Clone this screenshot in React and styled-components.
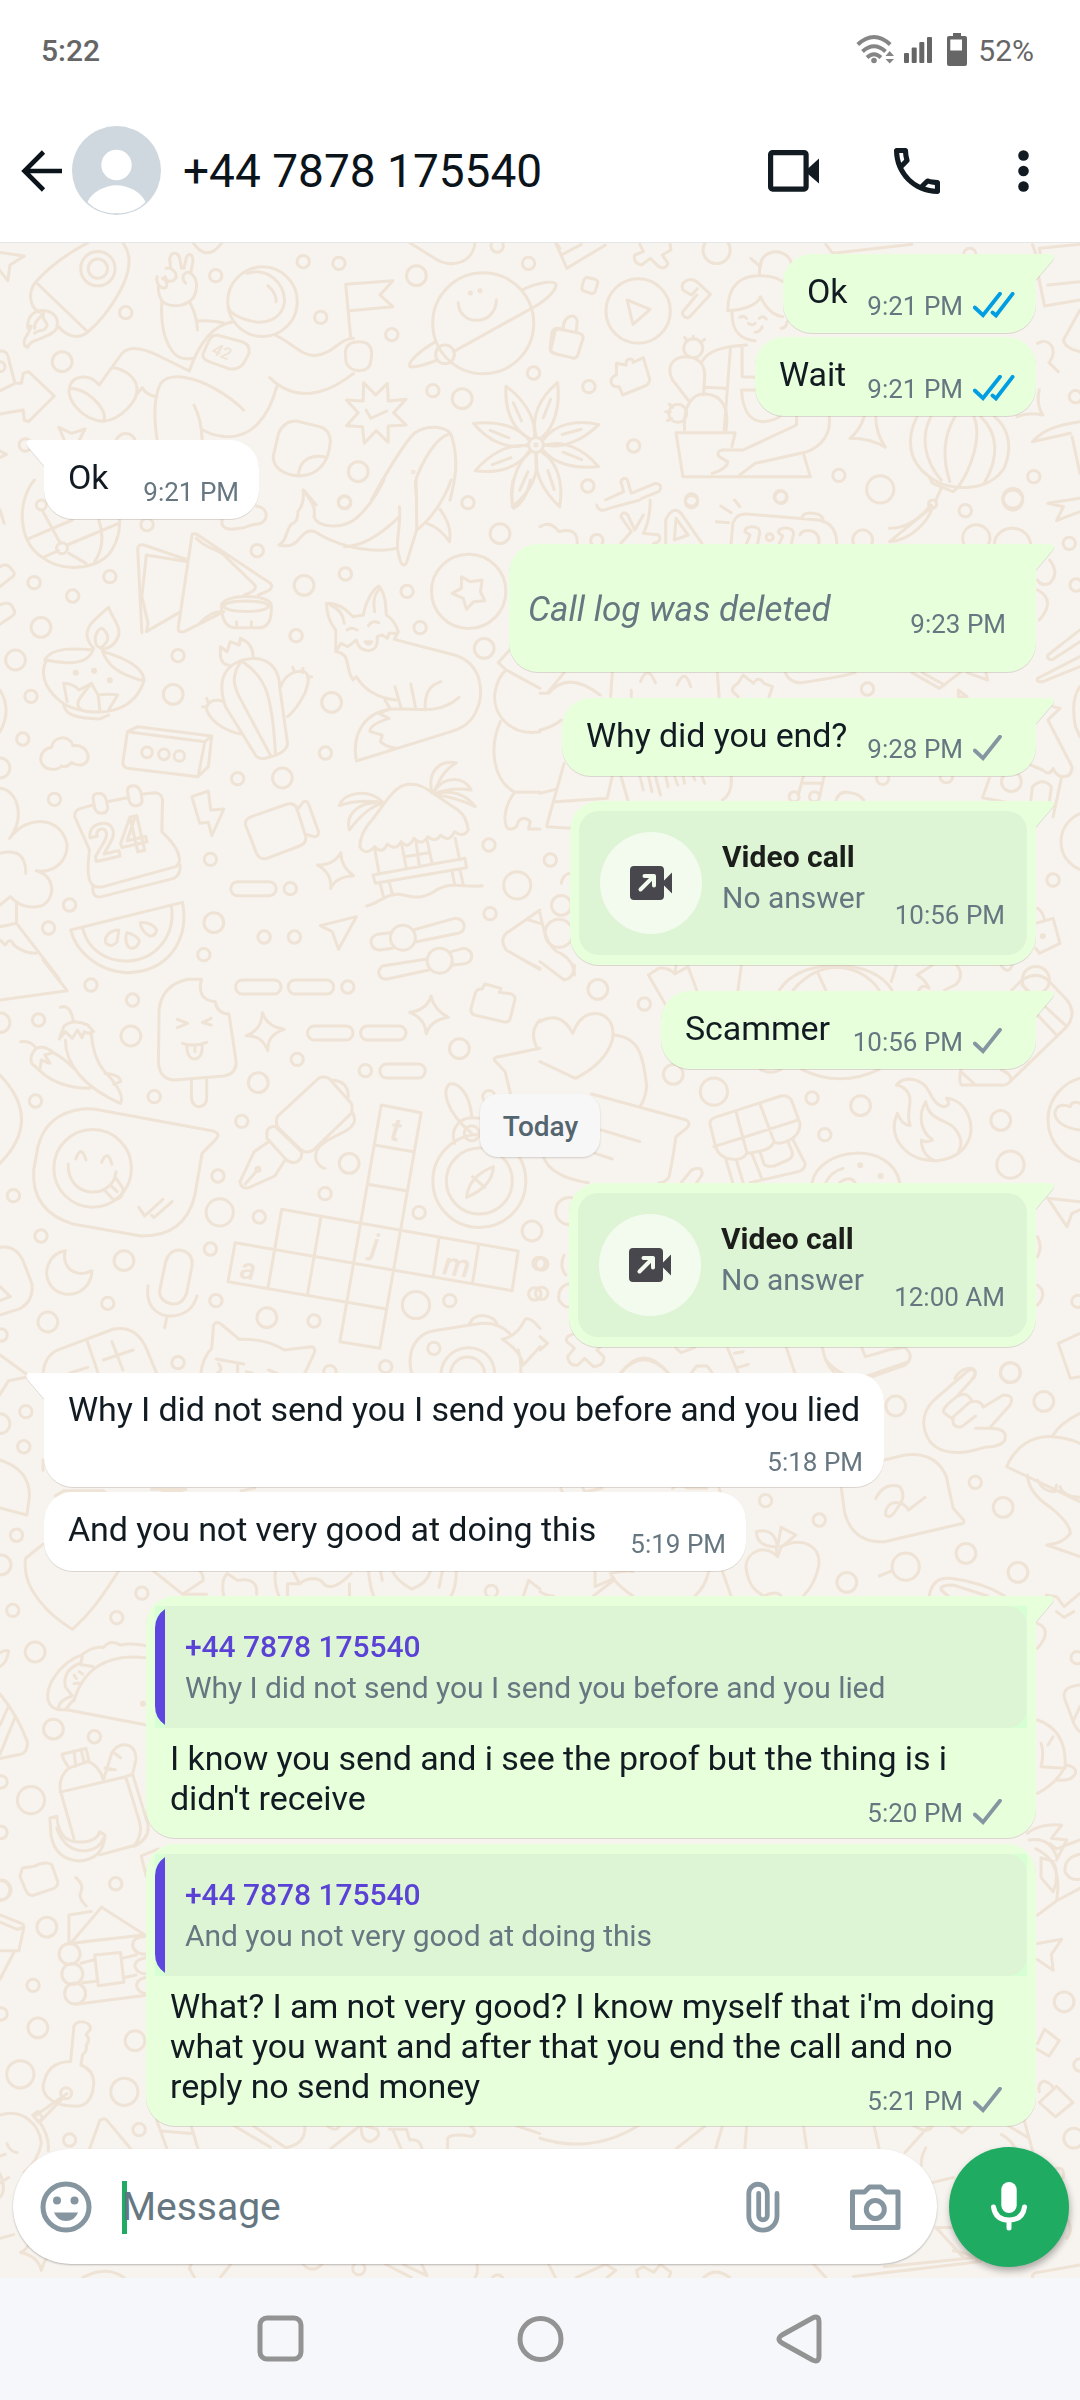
import styled, { createGlobalStyle, css } from "styled-components";

const line = "#efe3d6";

const pill = (x, y) => `M${x + 20} ${y}h92a20 21 0 0 1 0 42h-92a20 21 0 0 1 0 -42Z`;

// every patch of the wallpaper has its own origin and scale,
// s / m / l are the small, medium and large bubbles, c are other circles
const patches = [
    {
        x: 0, y: 0, kx: 2.8, ky: 3,
        s: [[604, 827], [849, 785], [949, 790], [352, 938], [898, 952], [1097, 1004], [1480, 790], [1392, 738], [1494, 1119], [1212, 1172], [71, 1335], [965, 1508]],
        m: [[174, 1085], [1166, 827], [1294, 1196], [1003, 1415], [352, 1330]],
        l: [],
        c: [[274, 806, 17.2], [274, 806, 9.6], [735, 905, 34.8], [1353, 970, 50.5], [1246, 1063, 9.4], [1317, 879, 1], [1344, 872, 1], [1157, 1416, 0.7], [0, 1100, 5]],
        d: [
            "M248 727C180 765 130 810 100 846C75 880 85 925 112 937M343 727C375 770 360 830 330 885C300 940 275 970 246 996C220 1020 185 1010 160 975M100 846L246 996",
            "M160 975C165 945 140 930 112 932C90 935 75 955 78 985C95 965 85 990 70 1015C65 1030 68 1040 78 1042C85 1020 100 1025 125 1010C150 1000 162 990 160 975M97 985C95 965 110 955 122 940C115 960 130 960 132 975C125 1000 110 985 97 1000",
            "M-5 757L68 768L28 795L22 842L-5 806M540 727Q580 790 622 727",
            "M440 830C435 850 450 870 465 862C470 850 465 840 455 835M465 805C480 800 498 820 492 835C480 850 465 845 462 830M478 805L475 775C480 755 498 755 503 775L508 805M515 805L522 772C530 755 542 765 540 785L534 818M520 850C505 835 515 812 530 818C555 830 555 870 540 895C520 920 480 925 455 905C445 890 443 870 443 860",
            "M453 905C450 960 455 1010 480 1050C495 1075 515 1080 540 1075M532 908C548 940 552 960 553 990M553 963C590 960 600 965 625 968M650 966C600 975 560 1020 530 1113L440 1065C395 1042 360 1035 340 1062L278 1155M278 1155C250 1120 205 1125 195 1160C185 1200 230 1260 290 1264C340 1258 390 1200 383 1160C378 1130 345 1105 315 1103M195 1165C240 1165 300 1220 292 1264M385 1180L398 1163Q410 1185 438 1190",
            "M692 820C750 800 797 850 797 905C790 960 740 975 700 962C670 955 645 940 640 925M750 857Q775 880 773 905",
            "M612 1006L680 1026Q702 1036 697 1060L682 1090Q667 1112 640 1106L585 1085Q562 1075 570 1058L585 1022Q595 1002 612 1006Z",
            "M770 1005C820 1030 840 1065 880 1067C930 1065 950 1015 990 1015M755 1133C820 1200 900 1195 990 1120M775 1160C750 1260 700 1310 640 1310Q600 1310 568 1290M440 1320C430 1250 430 1190 450 1150C480 1110 560 1140 600 1165Q650 1195 682 1230M543 1215C560 1250 565 1280 566 1320",
            "M1005 1025C960 1025 965 1060 970 1090C985 1120 1035 1120 1038 1085C1045 1050 1040 1025 1005 1025ZM982 1015L968 853L1100 842L1064 885L1100 920L978 932",
            "M1465 868C1510 845 1555 840 1557 855C1555 880 1510 915 1480 930L1270 1055M1220 1025C1180 1050 1140 1085 1148 1100C1160 1105 1200 1090 1225 1080M1283 908C1285 980 1388 980 1390 900",
            "M1145 727L1210 770C1260 810 1325 790 1330 727M1555 727L1568 745M1568 985L1555 990L1542 1050Q1545 1060 1568 1065",
            "M1018 1148L1052 1185L1085 1150L1087 1203L1137 1198L1102 1238L1137 1275L1087 1278L1087 1327L1053 1292L1020 1330L1015 1280L970 1277L1003 1238L970 1200L1017 1203ZM1025 1230L1038 1255L1083 1233",
            "M830 1263L895 1280Q925 1290 925 1325C920 1390 890 1425 840 1428C790 1425 765 1400 765 1370L780 1300Q795 1262 830 1263M835 1425C840 1380 870 1360 915 1372",
            "M1040 1500C1070 1440 1130 1330 1160 1300C1200 1270 1260 1280 1265 1310C1285 1380 1275 1440 1260 1500M1255 1303C1210 1320 1160 1430 1163 1455L1167 1500M850 1470L885 1515",
            "M-5 1055Q20 1045 25 1080L42 1150L60 1150L65 1120L80 1115L152 1188L80 1265L68 1260L65 1230L-5 1243M-5 1175L42 1150M180 1320L165 1282L200 1300L238 1287L222 1320M-5 1350L18 1363L-5 1375",
        ],
    },
    {
        x: 540, y: 0, kx: 2.904, ky: 3,
        s: [[1248, 763], [142, 1160], [272, 1338], [139, 1458], [868, 1426], [1434, 1430], [1555, 1190], [440, 1500], [698, 1490]],
        m: [[1373, 1495]],
        l: [[513, 750], [988, 1468]],
        c: [[285, 933, 32.2], [445, 1045, 9.5], [400, 1240, 9]],
        d: [
            "M45 727L78 805L190 735M62 765L120 733M290 733L300 755L275 765Q270 790 295 795L320 775L345 800Q365 810 372 790L355 765L380 750L378 733",
            "M135 832L160 838Q170 842 167 852L160 875Q157 882 148 880L125 872Q120 868 122 860L128 838ZM253 900L320 928L270 973Z",
            "M415 870C405 845 435 830 455 845L495 883L435 950C425 960 410 945 415 935L455 885M415 870L440 885L457 866",
            "M45 985L115 1000Q127 1005 125 1015L110 1065Q105 1078 92 1073L40 1060Q28 1055 30 1043L35 995ZM67 985C70 940 108 940 108 965L105 995",
            "M222 1090L250 1095C245 1075 275 1070 270 1088L300 1073L318 1135Q320 1150 305 1158L240 1185L230 1160C200 1165 200 1130 222 1125Z",
            "M612 775L640 800C640 760 680 750 700 758C720 762 730 785 730 790M638 795L637 823M545 932C545 850 590 825 640 827Q690 828 710 850M545 932C600 930 635 910 640 890Q665 945 705 950M558 935C555 1000 590 1020 625 1022M580 952Q592 945 600 955M637 955Q648 945 657 957M605 970Q615 978 625 970M645 980Q640 995 625 997M700 985Q715 985 718 965",
            "M600 1035C530 1040 490 1050 470 1085M553 1045L535 1290M587 1040L587 1130L625 1132M480 1162L538 1165M585 1170H670M585 1170C590 1250 620 1265 650 1265Q690 1260 700 1245M430 1200L385 1140C365 1100 385 1070 425 1070C460 1070 480 1095 478 1130L475 1185M420 1290C415 1220 440 1180 480 1182C530 1185 550 1225 540 1290",
            "M420 1012L428 1024M445 1008V1018M478 1018L466 1028M365 1235H378M375 1212L385 1222M370 1262L382 1256",
            "M395 1298H567L557 1340M395 1298L415 1430H785L765 1360M745 1250V1275L590 1350H530Q510 1355 520 1370L545 1385Q545 1405 500 1420M840 1250C845 1300 820 1340 770 1357L625 1390L580 1425",
            "M942 1248Q930 1290 900 1315Q960 1315 1003 1342Q975 1300 975 1248",
            "M830 733L850 760L1080 733M1430 733L1440 762M1568 733L1450 745L1460 800M1448 830L1465 918L1568 900M1475 855L1568 845M1445 1030C1480 1010 1505 1050 1480 1085M1478 1088L1505 1115M1450 1170Q1440 1210 1460 1245Q1420 1235 1385 1250M1568 930L1520 1020Q1525 1045 1568 1055",
            "M1095 1250C1065 1310 1065 1380 1130 1430C1190 1480 1310 1475 1350 1400C1375 1330 1355 1280 1320 1250M1135 1250C1105 1310 1115 1380 1165 1440M1205 1250C1170 1310 1170 1380 1190 1445M1260 1250C1285 1310 1250 1410 1215 1460M1280 1250C1330 1300 1335 1370 1290 1450M1130 1430L1140 1450L1200 1475L1215 1460M1165 1465L1150 1500",
            "M1430 1325C1460 1290 1500 1275 1568 1265M1430 1325L1540 1300M1545 1310L1568 1420M235 1445C240 1430 255 1435 255 1445L265 1480L335 1450Q360 1455 345 1475L295 1495M235 1445L243 1475L190 1500",
        ],
    },
    {
        x: 0, y: 480, kx: 2.904, ky: 3,
        s: [[427, 134], [1000, 66], [1359, 68], [747, 212], [1003, 282], [319, 290], [99, 308], [211, 348], [1182, 334], [1220, 443], [860, 467], [517, 527], [90, 649], [66, 777], [945, 819], [690, 896], [158, 958], [611, 1138], [1420, 1095], [1423, 1301], [202, 1275], [141, 1344], [767, 1371], [855, 1371], [592, 1424], [843, 1226]],
        m: [[1452, 161], [883, 316], [119, 442], [1406, 505], [45, 540], [503, 643], [963, 667], [820, 894], [0, 864], [621, 1328]],
        l: [[1502, 1216]],
        c: [[1361, 334, 37.2], [120, 75, 5], [180, 205, 5.5], [427, 817, 5.3], [476, 823, 5.3], [521, 828, 5.3], [1170, 1373, 12.5], [1277, 1442, 12.5], [220, 578, 1.5], [273, 572, 1.5], [319, 601, 1.5]],
        d: [
            "M100 0C50 60 50 180 120 230C180 280 290 270 325 210Q350 165 347 120M85 175L210 120M125 95L175 190M130 230L170 212M195 195L345 130M200 220L250 250M287 120Q310 190 275 245",
            "M0 260Q20 245 35 270Q50 285 30 295L0 320M0 375Q30 360 38 385Q50 400 30 412L0 433M0 90L12 130M645 120C640 150 670 150 695 145C715 145 730 130 745 133C780 130 785 85 745 78",
            "M412 458L400 210Q400 190 418 195L545 240M425 225L545 245M425 225L412 350L430 430L425 455L520 398M558 162Q560 160 570 162L785 310Q795 320 780 332L750 345M558 162L518 440Q515 460 535 455L650 395M570 175C600 210 640 205 660 235L740 315Q750 330 710 345M580 430Q610 395 640 395",
            "M643 378C643 340 790 340 788 378Q790 440 755 443H680Q645 440 643 378M650 378C655 400 775 400 780 378M650 378C655 358 775 358 780 378M687 425V443M730 425V443",
            "M880 30C915 75 915 90 912 110C920 145 1000 150 1040 110C1080 70 1100 30 1115 0M880 30Q885 70 865 95Q865 125 850 130C830 140 835 185 810 195Q850 205 870 175C890 150 910 145 930 165C1000 205 1090 220 1150 205M1000 200C1060 200 1120 150 1160 110M1160 80C1165 130 1150 180 1155 210Q1165 270 1180 250L1210 150C1250 120 1290 60 1310 0M1210 150Q1210 60 1208 0M1240 130Q1280 145 1305 185Q1315 140 1278 88",
            "M272 505C240 470 250 440 285 410Q300 395 315 382C330 420 350 440 345 465Q335 500 300 508M280 495C270 470 285 445 297 445C315 460 320 480 300 497Q290 510 280 495M130 540C150 500 220 505 270 510Q255 550 195 548Q150 545 135 540C110 590 140 640 190 675C250 705 380 720 418 603C350 585 310 560 295 505M300 515C350 530 420 560 418 603M185 675C190 700 210 715 290 717L315 705M185 610Q210 610 230 630L265 610L285 645Q320 640 342 645L315 690M185 610L195 665M265 610L235 650Q215 680 240 692M290 690L285 645",
            "M640 530L640 500L660 515L668 485L695 495L698 475Q735 490 735 530M640 530Q645 555 665 555M745 830L655 680C625 590 660 540 740 535C800 540 812 590 812 620L835 790Q835 820 770 835Q755 838 745 830M700 545C660 600 690 640 710 680L785 825M705 545C770 590 790 640 800 820M815 620C830 580 860 570 885 575Q905 590 885 640Q860 690 835 710M650 665C620 655 600 665 600 690C615 730 660 755 705 763M850 562L855 575M880 565L878 578M905 590H893M588 680H600M600 655L605 668",
            "M370 755L400 740L615 768L605 860L575 890L370 865Q355 860 357 845L370 755L595 785L575 890M595 785L615 768",
            "M948 370C990 370 1010 395 1025 410L1055 405C1060 370 1080 330 1100 318C1120 340 1120 380 1122 405Q1145 420 1157 455L1145 478L1320 525C1400 550 1410 640 1380 700Q1360 740 1310 755L1035 843C1020 760 1060 700 1130 688M948 370Q950 420 975 450L975 515C1020 520 1000 560 1025 600L1035 590Q1070 650 1150 660M975 515L990 490L1010 500L1035 480Q1040 510 1070 512Q1100 510 1095 470L1110 465L1125 475L1130 460L1155 460M960 375Q995 390 1000 430M1088 395Q1080 350 1100 330M1008 450Q1020 440 1037 450M1070 437Q1080 420 1100 428M1060 485Q1070 500 1080 485Z",
            "M1118 660L1132 685M1147 620L1165 685M1193 612L1207 685M1280 605Q1230 620 1235 690M1130 688C1200 680 1270 710 1333 652M1130 688L1100 700L1130 715Q1070 735 1075 755L1110 765L1105 785Q1120 800 1150 805",
            "M1340 290L1365 305L1400 300L1395 335L1408 362L1375 365L1355 388L1345 355L1313 340L1340 325Z",
            "M150 868C110 865 105 810 150 802C155 765 205 765 212 797C260 790 270 850 235 855Q215 855 208 847Q195 865 178 858Q170 870 150 868Z",
            "M270 975L235 985Q215 990 217 1010L260 1110Q250 1190 265 1210Q275 1225 300 1220L510 1160Q525 1150 520 1130Q515 1100 470 1055L472 960Q470 940 450 938L410 943M310 965L370 953M270 1220V1235Q275 1255 295 1250L505 1195Q525 1185 523 1155M270 955Q270 940 287 940Q305 940 310 965L313 985Q310 1000 295 1000Q280 1000 275 985ZM370 932Q370 917 387 917Q405 917 410 942L413 962Q410 977 395 977Q380 977 375 962Z",
            "M557 950L605 933L612 990L650 987L615 1067L605 1027L580 1030Z",
            "M730 1010L835 972Q855 968 862 985L888 1070Q890 1090 870 1098L775 1135Q755 1140 745 1120L713 1035Q710 1018 730 1010ZM862 990L882 965Q892 960 897 975L925 1055Q925 1070 912 1070L885 1062",
            "M1045 1100Q1045 1060 1080 1020C1120 970 1140 920 1185 913C1230 910 1240 930 1330 990Q1355 1010 1360 1050Q1345 1075 1320 1055Q1305 1090 1280 1065Q1265 1090 1242 1070Q1225 1100 1202 1075Q1185 1110 1165 1085Q1150 1115 1125 1092Q1110 1125 1088 1100Q1060 1130 1045 1100M1088 1105L1100 1175M1322 1075L1335 1140M1083 1185L1350 1135L1355 1163L1090 1210ZM1167 1095L1180 1165M1240 1080L1255 1150M1208 1085L1218 1160M1175 1130L1245 1118M1103 1208L1115 1255M1130 1205L1140 1245M1312 1170L1320 1212M1335 1168L1345 1212",
            "M1065 1278C1100 1270 1120 1240 1160 1243C1200 1250 1220 1260 1260 1235C1310 1200 1350 1225 1400 1217M1255 940C1240 880 1270 840 1325 848Q1290 870 1275 905L1260 935C1290 885 1350 890 1368 930Q1310 920 1265 940Q1340 925 1380 980Q1320 950 1265 945M1110 965C1070 925 1000 935 985 977Q1030 960 1095 965M1110 970C1050 960 1000 1000 1015 1050Q1060 985 1110 970",
            "M990 1118Q990 1160 1027 1187Q975 1190 960 1225Q965 1180 922 1155Q970 1155 990 1118Z",
            pill(670, 1205),
            "M930 1337L1035 1310L983 1408L965 1355Z",
            "M1135 1358L1095 1363Q1075 1370 1078 1390Q1082 1410 1105 1410L1140 1405M1200 1350L1320 1315Q1345 1315 1348 1338Q1348 1355 1330 1360L1210 1385M1240 1437L1110 1458Q1098 1470 1100 1480Q1105 1500 1125 1497L1245 1470M1310 1415L1345 1405Q1370 1408 1370 1430Q1368 1450 1345 1452L1310 1455",
            "M205 1350L530 1267C550 1380 490 1475 370 1478C280 1475 220 1410 205 1350ZM240 1345C255 1410 310 1445 370 1443C450 1440 510 1370 498 1280M345 1350L340 1385Q325 1405 308 1390C300 1370 320 1350 345 1350ZM368 1358Q400 1365 405 1385Q395 1410 375 1403Q360 1385 368 1358ZM407 1328Q440 1325 455 1350Q450 1370 435 1368Q410 1355 407 1328Z",
            "M0 925C50 930 75 1010 28 1075C80 1000 180 1010 195 1095C195 1150 150 1180 105 1172C160 1185 165 1255 120 1278Q65 1290 30 1250L0 1275M0 1120Q75 1100 75 1180M48 1265V1330L172 1497M0 1340L48 1330M0 1380L15 1395Q30 1370 40 1395Q70 1420 105 1420M0 630Q35 690 0 755",
            "M1568 755C1480 770 1430 700 1437 640Q1445 590 1470 570L1568 625M1470 570L1447 548L1480 510M1453 725C1420 800 1430 900 1495 937H1568M1495 937C1460 980 1460 1045 1480 1047Q1500 1050 1505 1025Q1520 1005 1540 1025L1535 1047H1568M1568 1290L1470 1360Q1450 1380 1470 1410L1568 1468M1535 1320L1568 1330M1490 0Q1480 50 1492 85Q1530 60 1540 0",
        ],
    },
    {
        x: 540, y: 500, kx: 2.904, ky: 3,
        s: [[1235, 32], [1537, 130], [165, 122], [951, 567], [30, 1080], [1490, 1140], [440, 5], [700, -8], [1557, 255], [995, 835], [1180, 830]],
        m: [[937, 120], [1373, 0], [1369, 845], [62, 1216]],
        l: [[1267, 115], [1440, 1440]],
        c: [[1140, 12, 4], [738, 890, 5], [797, 890, 5], [1600, 1025, 30], [55, 1300, 14], [1460, 1309, 1.5], [667, 112, 3.5]],
        d: [
            "M0 80Q30 60 55 95Q110 80 108 130M165 15Q170 40 200 25L290 0M320 0Q320 60 300 100L345 105Q355 125 330 130M235 50Q240 30 255 45L275 90L300 45M235 50L265 95L235 130M365 130V60Q385 15 410 40L470 130M390 120L395 55L430 105ZM555 130L560 70Q570 40 600 42L810 60Q860 70 862 130M760 55Q765 35 795 40Q825 45 822 65M525 18L555 38M565 0L580 20M512 65L548 68",
            "M1015 85C1060 85 1100 60 1135 15M1140 20C1130 60 1080 120 1015 125ZM1475 10L1568 -5M1475 10L1520 20L1500 62L1568 35M1320 130C1320 80 1410 60 1425 130M1480 180Q1510 220 1480 250Q1455 260 1445 240M1445 270Q1500 300 1450 360",
            "M600 130L610 105L595 95Q595 80 615 80Q640 80 638 100L632 130M695 130L705 108L692 98Q692 84 712 84Q738 84 736 104L730 130M755 105Q760 90 785 92Q812 96 810 130",
            "M1568 390L1475 465Q1470 480 1490 478L1568 425M1568 470L1445 535Q1440 548 1460 545L1568 500M1568 560Q1540 600 1555 680L1568 710M1475 660L1510 625L1490 620M1475 660L1545 800Q1545 830 1520 830Q1500 830 1490 805Q1480 830 1460 810L1425 795M1305 835L1285 893L1420 920M1515 830L1490 950M1425 905L1430 860Q1460 830 1485 860L1478 915",
            "M25 575L70 518M0 580H25Q80 510 175 585M205 590L210 518M515 518L520 590M292 545Q312 490 335 548M398 555Q420 500 438 560M265 570V590M560 575Q555 560 575 550L590 525L620 550Q635 525 650 550L675 560L665 590M560 575L575 590M712 518Q725 550 760 548Q880 530 915 518M1080 518L1160 565L1220 518M1110 518L1175 555M1240 518L1300 540L1295 518M1215 570L1240 590H1215Z",
            "M70 790L20 975M0 880L45 868M45 905L195 895L210 828M235 828L255 900M290 828L300 870M315 828L325 875M335 828L350 885M365 828L372 860M390 828L400 855M415 828L420 850M445 828L450 840M470 828L478 850M555 828Q560 880 530 900M765 828L750 885M825 828L812 890M765 850H820M860 900Q870 870 900 878Q925 880 940 900M0 690Q40 680 62 660M20 980L90 985",
            "M85 1120Q65 1125 62 1150M0 1240Q20 1350 60 1360Q100 1385 100 1425M1445 1225Q1460 1235 1465 1260M1440 1270L1490 1255L1510 1330L1450 1360L1440 1345",
        ],
    },
    {
        x: 0, y: 960, kx: 2.904, ky: 3,
        s: [[264, 75], [385, 120], [112, 180], [1010, 81], [863, 298], [1061, 332], [448, 410], [103, 423], [702, 484], [39, 707], [633, 648], [119, 828], [753, 771], [944, 701], [1217, 758], [611, 867], [627, 1022], [313, 1030], [912, 1083], [517, 1208], [1260, 1165], [1306, 1022], [1120, 1220], [958, 1235], [3, 1125], [1553, 1002], [1565, 910], [1420, 410]],
        m: [[380, 228], [0, 188], [750, 368], [1334, 266], [1014, 610], [360, 902], [139, 1086], [775, 1073], [1545, 813]],
        l: [[638, 757], [1208, 1035]],
        c: [[269, 625, 38.8], [1392, 663, 46.5], [1392, 663, 33], [1370, 520, 7.5], [749, 628, 2]],
        d: [
            "M125 0L195 92L0 120M0 345Q125 480 0 610",
            "M585 58H545Q470 75 462 150L460 310Q465 360 510 360L650 348Q690 340 685 300L665 162Q630 160 625 125Q570 120 585 58M515 178L545 190L515 203M613 175L588 188L613 195M530 250Q565 262 600 247M542 258Q545 300 568 297Q590 290 587 255M566 262V275M556 362V415Q560 440 578 440Q600 438 600 415V355",
            "M175 142Q205 130 213 185M172 237L185 200Q210 175 255 195L272 215L255 220L245 215L238 233L225 210L210 235L190 215ZM190 240C190 310 240 380 350 430Q365 400 300 330Q270 290 265 220M60 245Q90 240 105 265M105 265Q85 285 92 310L115 332L120 300L145 310L130 285L155 278Q130 255 105 265M155 278Q185 295 215 325M115 332Q170 385 260 385M305 340Q350 345 350 365L330 373",
            pill(684, 60), pill(837, 60), pill(893, 198), pill(1047, 198), pill(1103, 312),
            "M762 158Q775 200 825 208Q775 225 778 272Q760 225 715 227Q760 210 762 158ZM1252 108Q1260 150 1302 172Q1250 180 1238 222Q1235 175 1190 157Q1240 150 1252 108Z",
            "M1408 72L1455 85L1450 97L1485 102Q1498 108 1495 120L1482 175Q1478 188 1465 186L1378 165Q1365 160 1368 145L1380 100Q1385 85 1400 87Z",
            "M240 447Q270 445 300 452L615 512Q645 520 625 540L587 580L565 710Q535 830 410 828L215 793Q90 755 98 630L110 560Q135 460 240 447Z",
            "M220 597Q235 550 250 600M295 607Q312 565 325 613M198 612C195 720 330 720 337 635M303 690L330 720Q360 715 357 685L337 655M320 675L340 695M403 742L420 768L473 718M440 765L447 773L500 725",
            "M805 470L925 355Q935 347 955 355L1020 430Q1025 445 1020 460L910 570Q890 582 875 570L805 500Q800 485 805 470ZM775 515Q780 498 800 500L875 575Q880 600 855 608Q840 608 830 598L775 535ZM780 545L738 575L697 665Q700 690 725 682L798 648L828 600M712 672L748 630M960 360Q1010 360 1012 410M1022 455Q1045 490 1000 515C940 545 910 560 918 600Q925 620 943 625",
            "M1107 435L1223 458L1103 1165L987 1145ZM1088 555L1200 575M1068 673L1180 692M818 748L1505 873L1487 992L683 848L662 965L1122 1047M818 748L778 985M932 772L893 1003M1275 835L1258 950M1390 855L1372 970",
            "M1433 620Q1430 680 1355 712Q1360 650 1433 620ZM1372 650L1408 682M1320 550C1305 500 1340 465 1390 475M1370 470C1365 400 1330 365 1305 372C1285 390 1290 450 1370 520",
            "M1568 265L1440 292Q1430 298 1440 305L1467 335L1482 400M1568 180Q1535 215 1560 265M1520 0L1568 25",
            "M190 872C140 880 120 940 150 980C190 1025 265 1000 267 932Q235 950 205 930Q180 905 190 872Z",
            "M480 910Q490 870 520 870Q560 875 558 915L542 1000Q530 1035 500 1032Q465 1025 463 995ZM430 978C420 1050 470 1070 500 1068C540 1065 565 1040 572 1007M485 1070L478 1103",
            "M0 862Q50 855 70 910L92 970Q100 1020 60 1045L0 1065M0 980L30 1010L0 1022M0 1185L80 1245",
            "M125 1240Q130 1180 180 1165L330 1107Q395 1095 425 1165L455 1240M252 1140L285 1240M300 1200L387 1170M325 1145L357 1230M200 1240L255 1222",
            "M583 1240Q590 1190 615 1165L620 1095Q630 1080 645 1095L695 1138Q770 1135 825 1170L905 1160Q920 1165 910 1185L885 1240M628 1197L708 1212M635 1212Q650 1230 630 1240M690 1212V1240M715 1235L735 1240M780 1230L805 1240",
            "M1195 1240C1180 1170 1210 1120 1260 1112L1380 1093Q1440 1080 1480 1120M1362 1093Q1375 1065 1405 1067Q1435 1070 1443 1090M1280 1240C1290 1140 1430 1135 1437 1240M1308 1240C1315 1175 1400 1175 1408 1240M1525 1078Q1540 1070 1568 1105M1525 1078Q1500 1130 1458 1138Q1510 1170 1520 1215L1568 1160M1505 1170Q1515 1200 1512 1240",
        ],
    },
    {
        x: 540, y: 960, kx: 2.904, ky: 3,
        s: [[303, 132], [790, 414], [827, 524], [1562, 1024], [5, 1000], [5, 912]],
        m: [[168, 88], [387, 343], [931, 437], [1338, 481], [1366, 1238]],
        l: [[505, 395], [1366, 614], [85, 753]],
        c: [[1600, 480, 43], [930, 616, 1.5], [989, 648, 1.5]],
        d: [
            "M0 5L70 60Q100 55 100 15M315 45L345 25Q370 20 392 42L430 20L455 90M315 45L365 135M392 42L395 15M585 15L575 90M695 90Q740 20 860 15Q980 20 1022 90M735 90Q790 25 860 22Q940 25 985 90M805 35L830 90M1035 15L1020 65M1100 90Q1110 70 1130 85Q1120 60 1095 45L1140 15M1210 15Q1235 50 1205 75L1175 90M1340 18Q1360 45 1372 15",
            "M1370 90L1400 60Q1445 30 1480 65L1530 120Q1560 160 1530 200L1365 365Q1355 378 1335 375H1225Q1215 370 1222 330M1445 165L1500 225M1400 75L1530 200M1222 335L1265 375M1340 330Q1375 345 1365 365",
            "M0 185Q60 150 95 220Q120 150 175 162Q220 180 210 240Q190 310 103 355L0 305M212 225C290 230 300 290 310 380Q305 420 290 440",
            "M150 402L425 480Q440 490 425 505L395 530Q385 600 375 650Q365 668 345 668M178 510L290 545M160 580L210 597M10 590Q30 650 140 668M1568 430Q1545 420 1540 440Q1500 425 1495 460Q1500 500 1568 510",
            "M515 470L700 408Q720 405 730 420L755 490Q755 530 715 545Q690 555 680 545Q670 570 630 575Q605 580 600 580Q590 600 560 598Q520 595 510 560L493 490Q495 475 515 470ZM505 560L750 480M570 458L600 575M640 435L680 545M540 600L560 668M570 600L590 668M615 580L645 658M735 540L770 610Q770 630 750 635L610 668M640 580L650 610Q655 622 680 618L720 600Q738 590 730 570L720 545",
            "M790 668C810 560 1020 540 1045 668M830 668Q845 635 880 625M870 668Q900 645 915 668M410 668L440 630Q475 615 470 645L455 668",
            "M1035 375C1060 345 1110 355 1130 395Q1150 440 1175 440Q1195 435 1180 415C1240 420 1270 500 1240 550C1210 610 1110 620 1060 570C1020 530 1025 490 1038 460Q1050 495 1075 497C1060 450 1085 430 1070 400Q1060 380 1035 375ZM1120 425C1100 460 1100 510 1140 540Q1120 550 1107 540Q1110 590 1150 603M1120 425C1130 480 1170 475 1200 500Q1235 540 1215 575",
            "M760 328Q870 385 985 328M640 328Q670 345 700 328M1475 715L1568 725M1475 715L1530 800L1545 760L1568 750M1445 830Q1460 860 1445 890M1445 975Q1475 1000 1445 1035M1505 1150L1568 1120M1505 1150L1540 1255L1568 1250",
            "M70 885Q55 920 75 945M85 970Q50 980 55 1020Q70 1045 85 1040M0 1130L22 1150L0 1170",
            "M110 1115L80 1130Q70 1145 90 1155L100 1165L80 1190Q85 1220 110 1215L130 1195L155 1220Q190 1215 185 1190L165 1170L185 1150M235 1238Q300 1150 372 1238M395 1165L410 1178L450 1162M440 1238L455 1218H485L500 1238M545 1165L575 1238M575 1222L605 1213M565 1180L590 1175M715 1162L740 1238M820 1162Q830 1230 880 1255M935 1165L945 1190L980 1180L1010 1170L1060 1162Q1090 1190 1060 1215L965 1250M1205 1255Q1220 1225 1250 1225Q1275 1230 1255 1258",
        ],
    },
    {
        x: 0, y: 1360, kx: 2.904, ky: 2.904,
        s: [[75, 150], [69, 252], [48, 509], [412, 677], [37, 727], [339, 748], [274, 1094], [336, 1521], [3, 1225], [3, 1372], [1427, 672]],
        m: [[0, 185], [3, 595], [102, 848], [155, 1072], [0, 1540]],
        l: [[90, 1278]],
        c: [[415, 998, 1.5]],
        d: [
            "M0 100L25 60L75 50M0 290Q90 320 85 400L78 450L0 430M160 395L185 380H300L310 390M125 290V320M75 575C60 660 140 740 210 782C270 730 300 680 345 612M75 575L125 535M445 612L530 680L590 640Q590 620 580 612M530 680H600M650 685Q640 640 660 620L690 640Q750 630 745 680M800 612Q795 650 810 685M1070 612Q1075 660 1085 685M1105 612L1110 640M850 612L870 650H835V685M870 650C890 630 930 630 940 650C960 670 990 650 1020 620M1015 650V685M1140 612Q1150 640 1195 665Q1240 650 1250 612M1285 612L1275 660M1325 612Q1325 660 1310 685M1520 685L1535 640L1568 665M440 375H540Q500 390 460 375M700 380L740 372",
            "M425 830Q380 820 350 828Q320 810 300 835Q270 830 240 855C170 880 120 960 145 1000Q160 1020 190 1015L425 1060M215 990C240 900 310 850 425 865M240 855L235 880Q180 900 190 950L210 975Q170 990 170 1010M235 885L270 890M190 1015L215 985M215 915L222 925M230 905L240 912M215 940L228 938",
            "M0 850Q15 840 25 845Q20 880 0 890M0 970Q50 1030 80 1110Q80 1140 60 1145L0 1157M0 1060L25 1005M0 1145L45 1035",
            "M200 1185L185 1160L180 1145L250 1128L258 1165ZM215 1135L220 1180M235 1130L245 1170M200 1185Q170 1210 175 1250L215 1390M175 1255L365 1210L405 1340Q415 1380 390 1410L290 1437M365 1210L385 1203L430 1350Q435 1390 390 1412M300 1220L325 1140Q345 1110 375 1120Q395 1130 395 1160L385 1203M330 1140L350 1155M305 1185L335 1190M255 1165Q290 1180 300 1220M145 1330L165 1325Q170 1400 230 1400Q280 1400 290 1370L305 1380Q300 1450 230 1455Q160 1450 148 1380ZM165 1360Q190 1430 250 1425Q290 1420 300 1390",
            "M65 1475L100 1470Q130 1455 150 1465L168 1515Q168 1530 155 1535L95 1555Q80 1555 75 1540L58 1500ZM460 1420L410 1440L425 1500",
        ],
    },
    {
        x: 540, y: 1360, kx: 2.904, ky: 3,
        s: [[1264, 367], [655, 422], [811, 480], [1560, 893]],
        m: [[1366, 38], [1463, 124], [1033, 138], [1345, 442], [1237, 580], [891, 667], [1388, 637]],
        l: [[1062, 620]],
        c: [],
        d: [
            "M1245 30Q1270 25 1262 50L1210 110Q1240 90 1255 125Q1280 120 1287 142L1345 105Q1380 105 1365 135L1305 205Q1360 205 1350 240Q1340 260 1290 262C1210 290 1130 285 1115 200Q1110 150 1150 115ZM1210 110Q1160 150 1175 160L1195 175L1250 125M1200 175Q1195 205 1225 200L1265 168M1265 205H1305",
            "M1000 300L1060 285Q1150 275 1180 350L1200 445L1230 480Q1235 490 1220 492L1000 545Q910 550 885 460L875 385M975 415Q1000 365 1045 380Q1065 410 1040 440Q1020 480 1003 465Q1005 425 1040 428Q1060 430 1070 450L1118 412",
            "M690 590C650 550 600 575 598 620C605 690 640 700 650 708M690 590L700 560C760 530 815 555 810 615Q800 670 765 708M650 708Q690 690 700 708M690 590L685 560Q630 560 628 515Q680 500 690 560L700 502L743 525L700 562",
            "M1355 320C1380 260 1430 225 1490 230Q1540 235 1568 250M1355 320L1568 425M1490 225Q1510 190 1568 160M1415 345Q1420 400 1480 440Q1540 490 1540 520Q1520 550 1472 555L1568 590M1445 360Q1460 395 1495 395L1500 375M1510 380Q1520 410 1568 412M985 648L1024 632",
            "M1130 708Q1140 650 1190 655Q1280 665 1350 708M1165 690Q1160 675 1200 675L1300 708M1165 690L1185 708M1470 705L1500 710L1522 740L1568 700M1500 755L1522 772L1550 755M1445 790Q1490 810 1445 865M1568 975Q1510 980 1525 1020L1550 1090Q1560 1110 1568 1115M1550 1080L1568 1040M1445 1080Q1530 1110 1525 1220Q1500 1270 1445 1300M1455 1150Q1465 1180 1455 1220L1525 1225M1490 1130L1475 1155M1525 1215Q1560 1220 1555 1240Q1545 1265 1500 1260M1415 1420Q1450 1390 1515 1395L1485 1435L1530 1440L1500 1500M1420 1440Q1480 1430 1500 1490",
            "M160 635V680L215 655M155 708L215 660L205 640Q260 630 270 635M205 640Q215 670 270 708M490 635Q480 680 450 708M530 635L555 708M0 695Q20 708 40 708M385 385Q400 370 430 385H485M520 385L525 398M60 385L65 395M125 385L130 395L180 385",
            "M235 38Q300 -40 372 38M830 0Q870 50 930 55M945 50L1070 5",
        ],
    },
    {
        x: 0, y: 1840, kx: 2.904, ky: 2.8,
        s: [[96, 407], [404, 811], [202, 840], [3, 487], [1042, 1200]],
        m: [[136, 244], [110, 526], [392, 562], [3, 140]],
        l: [[59, 656], [361, 705]],
        c: [[202, 319, 10.5], [210, 375, 10.5], [218, 430, 10.5], [192, 709, 5.5]],
        d: [
            "M220 105Q245 125 235 145Q225 160 250 185M295 188L420 265L205 290M265 200L200 210V290M205 290L295 188M240 285L380 270M235 345L275 335M360 330L395 322M240 400L285 395M360 385L395 378M220 460L425 435M275 322L350 315L360 398L285 408ZM425 270Q385 270 385 295Q390 320 425 320M425 330Q390 335 392 355Q400 375 425 375M425 385Q395 390 397 410Q405 430 425 430",
            "M0 210L65 235Q72 240 68 250L55 310H0M0 230L50 250L68 245M40 315L0 390",
            "M205 620L215 520Q225 505 245 510Q265 515 262 530L250 545Q265 560 250 575Q255 590 240 600L235 630Q275 645 272 685Q265 750 215 745C160 745 125 720 125 690Q135 620 205 620M195 710L105 770M185 720L120 785M95 770L110 760L125 778L112 790Z",
            "M0 770C70 750 115 800 120 850Q110 900 70 930M112 785Q145 830 140 870M20 850Q30 875 50 875M0 885L15 880M0 935Q20 980 0 1000M0 960L25 945M0 1115L40 1105M60 1155Q110 1165 120 1205Q130 1170 145 1165M60 1155Q80 1145 85 1130",
            "M260 865L290 785Q305 775 315 790L380 865M455 785L485 865M470 815L555 822M555 800L575 865M680 800L785 860M735 800L830 862Q890 850 885 800M950 800Q980 820 985 800M960 865L1045 800M1050 800Q1045 840 1075 845Q1110 830 1095 810L1060 800M1130 810H1180L1190 840Q1220 835 1225 865M1140 810L1165 865M1300 865V835Q1310 820 1370 830Q1390 815 1365 800M1500 800L1568 822",
            "M240 1225Q310 1190 360 1225M565 1225L550 1200L555 1188M640 1225L670 1188M880 1188Q905 1215 935 1188M1120 1188L1195 1225M1170 1188L1240 1220L1225 1188M1380 1225Q1390 1210 1385 1188M1430 1225Q1445 1210 1460 1225",
        ],
    },
    {
        x: 540, y: 1840, kx: 2.904, ky: 2.8,
        s: [[1568, 630]],
        m: [[1522, 453], [1550, 835]],
        l: [],
        c: [],
        d: [
            "M0 835Q150 880 285 800M395 865L480 800M510 865L530 800M595 865L600 800M765 800L775 865M970 800L985 865M1060 875L1130 800M1085 800Q1130 825 1140 800M1195 800L1225 820L1250 800M1405 780L1430 870M1340 825Q1370 840 1380 865M1360 800L1420 835M1120 862Q1105 890 1108 910M1135 960L1200 945M1155 1085H1200M1150 1085L1230 1170M1200 1150Q1240 1155 1270 1175M1500 920Q1525 915 1520 945M1530 1060Q1550 1090 1530 1115",
            "M1455 50L1490 60Q1510 100 1490 145L1455 105ZM1440 25Q1520 60 1500 170L1568 135M1500 170L1445 210M1568 40Q1520 50 1525 90Q1540 115 1568 110M1480 10L1500 25L1568 0M1445 290L1515 278L1485 320L1490 365L1445 335M1465 530L1508 562L1478 605L1442 585M1465 530L1445 570M1450 735L1500 690L1548 735L1497 775ZM1450 705Q1445 680 1465 675Q1490 685 1490 695",
            "M25 1188L45 1225M105 1225L190 1188L220 1205L195 1225M285 1225L280 1205L300 1195L330 1210L350 1188L380 1210L375 1225M475 1225Q510 1195 550 1225M795 1188L830 1225M1000 1195L1260 1170M910 1222L1280 1180M1430 1225Q1430 1210 1450 1210L1568 1190",
        ],
    },
];

const petals = [-117, -71, -18, 19, 69, 111, 157, -161];

function Patch({ x, y, kx, ky, s, m, l, c, d }) {
    const rings = [
        ...s.map(([a, b]) => [a, b, 6.2]),
        ...m.map(([a, b]) => [a, b, 9.9]),
        ...l.map(([a, b]) => [a, b, 13.6]),
        ...c,
    ];

    return (
        <>
            <g transform={`translate(${x} ${y}) scale(${1 / kx} ${1 / ky})`}>
                {d.map((path) => <path key={path} d={path} />)}
            </g>
            {rings.map(([a, b, r], i) => <circle key={i} cx={x + a / kx} cy={y + b / ky} r={r} />)}
        </>
    );
}

function Doodles() {
    return (
        <Wallpaper viewBox="0 243 1080 2035" aria-hidden="true">
            {patches.map((p) => <Patch key={`${p.x}-${p.y}`} {...p} />)}
            <g transform="translate(536 445)">
                <circle r="7.5" />
                <circle r="1" />
                {petals.map((a) => (
                    <path key={a} transform={`rotate(${a})`} d="M9 -3C24 -14 46 -12 66 0C46 10 24 12 9 3M28 -2L48 -1" />
                ))}
            </g>
            <text x="211" y="354" fontSize="17" transform="rotate(20 211 354)">42</text>
            <Outlined x="94" y="862" transform="rotate(-13 94 862)">24</Outlined>
            <text x="389" y="1140" fontSize="32" transform="rotate(8 389 1140)">t</text>
            <text x="370" y="1254" fontSize="30" transform="rotate(8 370 1254)">j</text>
            <text x="239" y="1278" fontSize="30" transform="rotate(8 239 1278)">a</text>
            <text x="442" y="1274" fontSize="32" transform="rotate(8 442 1274)">m</text>
        </Wallpaper>
    );
}

function Ticks({ type }) {
    return (
        <TickIcon viewBox="0 0 42 26" $read={type === "read"}>
            <path d="M1.8 15.5L10 23.2L27 1.8" />
            {type === "read" && <path d="M19.5 20.5L23 23.5L39.6 1.8" />}
        </TickIcon>
    );
}

function Tail({ left }) {
    return (
        <TailIcon viewBox="0 0 19 28" $left={left}>
            <path d="M0 0H15.5C18.5 0 19.6 3 17.8 6L0 27Z" />
        </TailIcon>
    );
}

function Message({ text, time, ticks, incoming, tail, width, top }) {
    return (
        <Bubble $incoming={incoming} $tail={tail} $width={width} $top={top}>
            {tail && <Tail left={incoming} />}
            <Line>
                <Text>{text}</Text>
                <Meta $pad={incoming ? 20 : 21}>{time}{ticks && <Ticks type={ticks} />}</Meta>
            </Line>
        </Bubble>
    );
}

function VideoCall({ time, width, top }) {
    return (
        <Bubble $tail $width={width} $top={top}>
            <Tail />
            <CallCard>
                <CallCircle>
                    <svg width="42" height="34" viewBox="0 0 42 34">
                        <path fill="#48474d" d="M4 0H30Q34 0 34 4V14.5L42 6.5V27.5L34 19.5V30Q34 34 30 34H4Q0 34 0 30V4Q0 0 4 0Z" />
                        <path fill="none" stroke="#f3fbee" strokeWidth="4" strokeLinecap="round" strokeLinejoin="round" d="M10.5 23.5L23 11M14.5 10H24V19.5" />
                    </svg>
                </CallCircle>
                <CallInfo>
                    <h3>Video call</h3>
                    <p>No answer</p>
                </CallInfo>
                <CallTime>{time}</CallTime>
            </CallCard>
        </Bubble>
    );
}

function Reply({ quote, lines, time, tail, top }) {
    return (
        <Bubble $tail={tail} $width={890} $top={top}>
            {tail && <Tail />}
            <Quote>
                <QuoteBar viewBox="0 0 10 122">
                    <path d="M10 3Q0 10 0 22V100Q0 112 10 119Z" />
                </QuoteBar>
                <div>
                    <h4>+44 7878 175540</h4>
                    <p>{quote}</p>
                </div>
            </Quote>
            <Body>{lines.map((l) => <span key={l}>{l}</span>)}</Body>
            <LowMeta>{time}<Ticks /></LowMeta>
        </Bubble>
    );
}

export default function App() {
    return (
        <Screen>
            <GlobalStyle />

            <StatusBar>
                <Clock>5:22</Clock>
                <StatusIcons>
                    <svg width="38" height="34" viewBox="857 33 38 34">
                        <g fill="none" stroke="#858585" strokeWidth="4">
                            <path d="M858.8 44.5Q875 29.5 891.2 44.5" />
                            <path d="M863.5 51.5Q875 41 886.5 51.5" />
                            <path d="M868 57.5Q875 51 882 57.5" />
                        </g>
                        <circle cx="875" cy="60.5" r="2.8" fill="#858585" />
                        <path fill="#858585" d="M886.5 56L890.7 51L895 56ZM886.5 59L890.7 63.5L895 59Z" />
                    </svg>
                    <svg width="28" height="34" viewBox="905 33 28 34" fill="#666">
                        <rect x="905" y="53" width="5" height="10" rx="1" />
                        <rect x="912.7" y="47.5" width="5" height="15.5" rx="1" />
                        <rect x="920.3" y="42" width="5" height="21" rx="1" />
                        <rect x="928" y="37" width="5" height="26" rx="1" />
                    </svg>
                    <svg width="20" height="34" viewBox="948 33 20 34" fill="#666">
                        <path fillRule="evenodd" d="M954 33H962V36H966Q968 36 968 38V64Q968 66 966 66H950Q948 66 948 64V38Q948 36 950 36H954ZM951.3 39.5V50.5H963V39.5Z" />
                    </svg>
                    <span>52%</span>
                </StatusIcons>
            </StatusBar>

            <Header>
                <svg width="41" height="42" viewBox="0 0 41 42" fill="none" stroke="#0b141a" strokeWidth="4.6">
                    <path d="M41 21H4M22.5 2L3.5 21L22.5 40" />
                </svg>
                <Avatar viewBox="0 0 89 89">
                    <circle cx="44.5" cy="44.5" r="44.5" fill="#cfd8df" />
                    <circle cx="44.5" cy="39" r="15.2" fill="#fff" />
                    <path fill="#fff" d="M15.5 76C20 66 33 59.3 44.5 59.3S69 66 73.5 76C66 84 56 87.3 44.5 87.3S23 84 15.5 76Z" />
                </Avatar>
                <h1>+44 7878 175540</h1>
                <Actions>
                    <svg width="51" height="42" viewBox="0 0 51 42">
                        <rect x="2.6" y="2.6" width="35.5" height="36.5" rx="2" fill="none" stroke="#111b21" strokeWidth="5.2" />
                        <path fill="#111b21" d="M40 18.5L51 8.5V33.5L40 24Z" />
                    </svg>
                    <svg width="46" height="46" viewBox="3 3 18 18" fill="#111b21">
                        <path d="M6.54 5c.06.89.21 1.76.45 2.59l-1.2 1.2c-.41-1.2-.67-2.47-.76-3.79h1.51m9.86 12.02c.85.24 1.72.39 2.6.45v1.49c-1.32-.09-2.59-.35-3.8-.75l1.2-1.19M7.5 3H4c-.55 0-1 .45-1 1 0 9.39 7.61 17 17 17 .55 0 1-.45 1-1v-3.49c0-.55-.45-1-1-1-1.24 0-2.45-.2-3.57-.57a.84.84 0 0 0-.31-.05c-.26 0-.51.1-.71.29l-2.2 2.2a15.149 15.149 0 0 1-6.59-6.59l2.2-2.2c.28-.28.36-.67.25-1.02A11.36 11.36 0 0 1 8.5 4c0-.55-.45-1-1-1z" />
                    </svg>
                    <svg width="11" height="42" viewBox="0 0 11 42" fill="#111b21">
                        <circle cx="5.5" cy="5.5" r="5.3" />
                        <circle cx="5.5" cy="21" r="5.3" />
                        <circle cx="5.5" cy="36.5" r="5.3" />
                    </svg>
                </Actions>
            </Header>

            <Chat>
                <Doodles />
                <Message top={11} width={253} text="Ok" time="9:21 PM" ticks="read" tail />
                <Message top={4.5} width={281} text="Wait" time="9:21 PM" ticks="read" />
                <Message top={24.5} width={215} text="Ok" time="9:21 PM" incoming tail />
                <Bubble $tail $width={527} $top={25}>
                    <Tail />
                    <Deleted>
                        <em>Call log was deleted</em>
                        <CallTime>9:23 PM</CallTime>
                    </Deleted>
                </Bubble>
                <Message top={26} width={474} text="Why did you end?" time="9:28 PM" ticks="sent" tail />
                <VideoCall top={25} width={466} time="10:56 PM" />
                <Message top={25.5} width={375} text="Scammer" time="10:56 PM" ticks="sent" tail />
                <Day>Today</Day>
                <VideoCall top={26} width={467} time="12:00 AM" />
                <Bubble $incoming $tail $width={840} $top={26}>
                    <Tail left />
                    <Wide>Why I did not send you I send you before and you lied</Wide>
                    <WideTime>5:18 PM</WideTime>
                </Bubble>
                <Message top={5} width={702} text="And you not very good at doing this" time="5:19 PM" incoming />
                <Reply
                    top={25.5}
                    tail
                    quote="Why I did not send you I send you before and you lied"
                    lines={["I know you send and i see the proof but the thing is i", "didn't receive"]}
                    time="5:20 PM"
                />
                <Reply
                    top={6}
                    quote="And you not very good at doing this"
                    lines={["What? I am not very good? I know myself that i'm doing", "what you want and after that you end the call and no", "reply no send money"]}
                    time="5:21 PM"
                />

                <Composer>
                    <InputPill>
                        <svg width="52" height="52" viewBox="0 0 52 52" fill="#8696a0">
                            <circle cx="26" cy="26" r="23" fill="none" stroke="#8696a0" strokeWidth="5" />
                            <circle cx="17" cy="19.5" r="4" />
                            <circle cx="34.5" cy="19.5" r="4" />
                            <path d="M14 31.5H38Q34.5 40 26 40T14 31.5Z" />
                        </svg>
                        <Cursor />
                        <Placeholder>Message</Placeholder>
                        <svg width="34" height="52" viewBox="0 0 34 52" fill="none" stroke="#8696a0" strokeWidth="4.8" strokeLinecap="round">
                            <path d="M31 12.5V35A14.1 14.1 0 0 1 2.8 35V12.5A9.25 9.25 0 0 1 21.3 12.5V34.5A4.3 4.3 0 0 1 12.7 34.5V12.5" />
                        </svg>
                        <svg width="52" height="47" viewBox="0 0 52 47" fill="none" stroke="#8696a0" strokeWidth="5" strokeLinejoin="round">
                            <path d="M3.5 8H15.5L20.5 3H32L37 8H49V43.5H3.5Z" />
                            <circle cx="26.3" cy="25.5" r="9" />
                        </svg>
                    </InputPill>
                    <MicButton>
                        <svg width="36" height="50" viewBox="0 0 36 50">
                            <rect x="10.3" y="0" width="15.4" height="31" rx="7.7" fill="#fff" />
                            <path d="M2.5 25Q4.5 38 18 38T33.5 25M18 39V46" fill="none" stroke="#fff" strokeWidth="5" strokeLinecap="round" />
                        </svg>
                    </MicButton>
                </Composer>
            </Chat>

            <NavBar>
                <svg width="50" height="50" viewBox="0 0 50 50"><rect x="4" y="4" width="41" height="41" rx="7" /></svg>
                <svg width="50" height="50" viewBox="0 0 50 50"><circle cx="25.5" cy="25" r="20.5" /></svg>
                <svg width="50" height="50" viewBox="0 0 50 50"><path d="M45 8V42Q45 49 38.5 46L8 29Q2 25 8 21L38.5 4Q45 1 45 8Z" /></svg>
            </NavBar>
        </Screen>
    );
}

const GlobalStyle = createGlobalStyle`
    body{
        margin: 0;
        background: #ffffff;
    }

    *{
        box-sizing: border-box;
    }

    h1, h3, h4, p{
        margin: 0;
    }

    svg{
        display: block;
        flex-shrink: 0;
    }
`;

const Screen = styled.div`
    width: 1080px;
    height: 2400px;
    display: flex;
    flex-direction: column;
    overflow: hidden;
    font-family: Roboto, sans-serif;
    color: #111b21;
`;

const StatusBar = styled.div`
    height: 100px;
    padding: 0 46px 0 41px;
    display: flex;
    justify-content: space-between;
    align-items: center;
    font-size: 30px;
    color: #666666;
`;

const Clock = styled.span`
    font-weight: 500;
`;

const StatusIcons = styled.div`
    display: flex;
    align-items: center;

    svg + svg{
        margin-left: 10px;
    }

    svg + svg + svg{
        margin-left: 15px;
    }

    span{
        margin-left: 11px;
    }
`;

const Header = styled.header`
    height: 143px;
    padding: 0 51px 1px 21px;
    display: flex;
    align-items: center;
    border-bottom: 1px solid #e4e7e9;

    h1{
        margin-left: 22px;
        font-size: 46px;
        font-weight: 400;
        line-height: 54px;
        color: #0b141a;
    }
`;

const Avatar = styled.svg`
    width: 89px;
    height: 89px;
    margin-left: 10px;
`;

const Actions = styled.div`
    margin-left: auto;
    display: flex;
    align-items: center;
    gap: 75px;

    svg:last-child{
        margin-left: 3px;
    }
`;

const Chat = styled.main`
    position: relative;
    height: 2035px;
    display: flex;
    flex-direction: column;
    background: #f7f3ee;
`;

const Wallpaper = styled.svg`
    position: absolute;
    top: 0;
    left: 0;
    width: 1080px;
    height: 2035px;
    fill: none;
    stroke: ${line};
    stroke-width: 3;
    stroke-linecap: round;
    stroke-linejoin: round;

    path{
        vector-effect: non-scaling-stroke;
    }

    text{
        fill: ${line};
        stroke: none;
        font-style: italic;
        font-weight: 500;
    }
`;

const Outlined = styled.text`
    && {
        fill: none;
        stroke: ${line};
        font-size: 50px;
        font-style: normal;
        font-weight: 700;
    }
`;

const Bubble = styled.div`
    position: relative;
    width: ${(p) => p.$width}px;
    margin-top: ${(p) => p.$top}px;
    border-radius: 29px;
    background: #e7ffdb;
    filter: drop-shadow(0 1.5px 0.7px rgba(60, 50, 40, 0.15));
    display: flex;
    flex-direction: column;

    ${(p) => p.$incoming ? css`
        align-self: flex-start;
        margin-left: 44px;
        background: #ffffff;
        ${p.$tail && "border-top-left-radius: 0;"}
        path{ fill: #ffffff; }
    ` : css`
        align-self: flex-end;
        margin-right: 44px;
        ${p.$tail && "border-top-right-radius: 0;"}
    `}
`;

const TailIcon = styled.svg`
    position: absolute;
    top: 0;
    width: 19px;
    height: 28px;
    fill: #e7ffdb;
    ${(p) => p.$left ? "left: -18px; transform: scaleX(-1);" : "right: -18px;"}
`;

const Line = styled.div`
    height: 78.5px;
    padding: 17px 0 12px 24px;
    display: flex;
    justify-content: space-between;
`;

const Text = styled.p`
    font-size: 34px;
    line-height: 40px;
    letter-spacing: -0.1px;
    white-space: nowrap;
`;

const Meta = styled.span`
    margin-top: auto;
    padding-right: ${(p) => p.$pad}px;
    display: flex;
    gap: 10px;
    font-size: 26px;
    line-height: 30px;
    white-space: nowrap;
    color: #667781;
`;

const TickIcon = styled.svg`
    width: 42px;
    height: 26px;
    margin-top: 1px;
    fill: none;
    stroke: ${(p) => p.$read ? "#009de2" : "#8696a0"};
    stroke-width: 3.8;
    stroke-linecap: round;
    stroke-linejoin: miter;
`;

const CallTime = styled.span`
    align-self: flex-end;
    margin-left: auto;
    font-size: 26px;
    line-height: 30px;
    color: #667781;
`;

const Deleted = styled.div`
    height: 128px;
    padding: 46px 30px 33px 19px;
    display: flex;

    em{
        font-size: 35px;
        line-height: 40px;
        color: #667781;
    }
`;

const CallCard = styled.div`
    height: 144px;
    margin: 10px 9px;
    padding: 0 22px 25px 21px;
    display: flex;
    border-radius: 20px;
    background: #ddf5d4;
`;

const CallCircle = styled.div`
    width: 102px;
    height: 102px;
    margin-top: 21px;
    display: flex;
    align-items: center;
    justify-content: center;
    border-radius: 50%;
    background: #f3fbee;
`;

const CallInfo = styled.div`
    padding: 28px 0 0 20px;

    h3{
        font-size: 30px;
        line-height: 36px;
        font-weight: 700;
        color: #1c1e1b;
    }

    p{
        margin-top: 5px;
        font-size: 30px;
        line-height: 36px;
        color: #667781;
    }
`;

const Day = styled.div`
    align-self: center;
    position: relative;
    width: 120px;
    height: 63px;
    margin-top: 25px;
    padding-left: 1px;
    border-radius: 18px;
    background: #f7f7f7;
    box-shadow: 0 1px 2px rgba(60, 50, 40, 0.2);
    text-align: center;
    font-size: 28px;
    font-weight: 500;
    line-height: 65px;
    color: #54656f;
`;

const Wide = styled(Text)`
    padding: 15.5px 0 0 24px;
`;

const WideTime = styled(CallTime)`
    margin: 18.5px 21px 10px 0;
`;

const Quote = styled.div`
    height: 122px;
    margin: 10px 9px 0;
    display: flex;
    background: #d6ffd3;

    div{
        flex: 1;
        padding: 23px 0 0 20px;
        border-radius: 0 20px 20px 0;
        background: #ddf5d4;
    }

    h4{
        font-size: 30px;
        line-height: 36px;
        font-weight: 500;
        letter-spacing: -0.05px;
        color: #5a42d6;
    }

    p{
        margin-top: 5px;
        font-size: 30px;
        line-height: 36px;
        letter-spacing: -0.06px;
        white-space: nowrap;
        color: #667781;
    }
`;

const QuoteBar = styled.svg`
    width: 10px;
    height: 122px;
    fill: #5e47de;
`;

const Body = styled.p`
    padding: 10px 0 0 24px;
    display: flex;
    flex-direction: column;
    font-size: 34px;
    line-height: 40px;
    letter-spacing: -0.08px;
    white-space: nowrap;
`;

const LowMeta = styled(Meta).attrs({ $pad: 21 })`
    align-self: flex-end;
    margin: -20px 0 10px;
`;

const Composer = styled.div`
    position: relative;
    margin: auto 11px 11px 13px;
    display: flex;
    justify-content: space-between;
    align-items: flex-start;
`;

const InputPill = styled.div`
    width: 924px;
    height: 115px;
    margin-top: 2px;
    padding: 1px 36px 0 27px;
    display: flex;
    align-items: center;
    border-radius: 58px;
    background: #ffffff;
    box-shadow: 0 1px 2px rgba(0, 0, 0, 0.25);

    svg:last-child{
        margin-left: 69px;
    }
`;

const Cursor = styled.i`
    width: 5px;
    height: 53px;
    margin-left: 30px;
    background: #1fab61;
`;

const Placeholder = styled.span`
    flex: 1;
    margin-left: -5px;
    font-size: 39px;
    line-height: 46px;
    color: #667781;
`;

const MicButton = styled.button`
    width: 120px;
    height: 120px;
    padding: 0;
    display: flex;
    align-items: center;
    justify-content: center;
    border: none;
    border-radius: 50%;
    background: #1fab61;
    box-shadow: 1px 4px 7px rgba(0, 0, 0, 0.3);
`;

const NavBar = styled.nav`
    position: relative;
    height: 122px;
    display: flex;
    align-items: center;
    justify-content: center;
    gap: 209px;
    background: #f6f7fa;
    fill: none;
    stroke: #939393;
    stroke-width: 5;
`;
